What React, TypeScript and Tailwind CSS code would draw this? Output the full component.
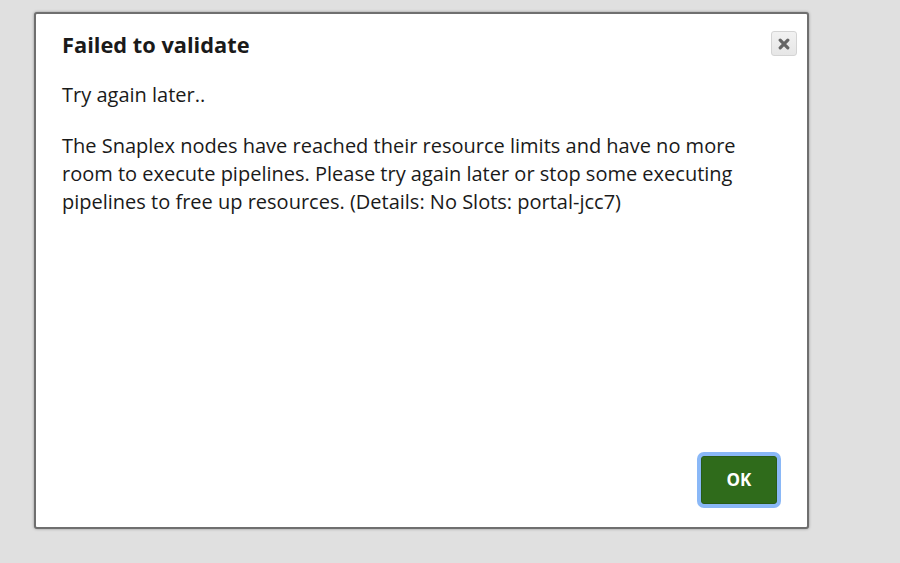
import React from "react";

const App = () => {
  return (
    <div className="h-[563px] w-[900px] bg-[#e0e0e0] pt-[12px] pl-[34px] font-['Open_Sans',sans-serif] overflow-hidden">
      <div className="flex h-[517px] w-[775px] flex-col rounded-[3px] border-2 border-[#6f6f6f] bg-white shadow-[0_0_3px_rgba(0,0,0,0.35)]">
        {/* Header */}
        <div className="flex items-start justify-between pl-[26px] pr-[10px] pt-[17px]">
          <h2 className="text-[21.8px] font-bold leading-[28px] text-[#1a1a1a]">Failed to validate</h2>
          <button className="flex h-[25px] w-[26px] items-center justify-center rounded-[3px] border border-[#d4d4d4] bg-gradient-to-b from-[#f2f2f2] to-[#e6e6e6]">
            <svg width="12" height="12" viewBox="0 0 12 12">
              <path d="M2.2 2.2 L9.8 9.8 M9.8 2.2 L2.2 9.8" stroke="#666" strokeWidth="3.2" strokeLinecap="round" />
            </svg>
          </button>
        </div>

        {/* Body */}
        <div className="flex-1 pl-[26px] pr-[36px] pt-[22px] text-[20px] leading-[28px] text-[#1a1a1a]">
          <p>Try again later..</p>
          <p className="mt-[23px]">
            The Snaplex nodes have reached their resource limits and have no more room to execute pipelines. Please
            try again later or stop some executing pipelines to free up resources. (Details: No Slots: portal-jcc7)
          </p>
        </div>

        {/* Footer */}
        <div className="flex justify-end pb-[23px] pr-[30px]">
          <button className="h-[48px] w-[76px] rounded-[3px] border border-[#295c17] bg-[#2f6b1b] text-[17px] font-bold text-white ring-4 ring-[#8ab8f7]">
            OK
          </button>
        </div>
      </div>
    </div>
  );
};

export default App;
